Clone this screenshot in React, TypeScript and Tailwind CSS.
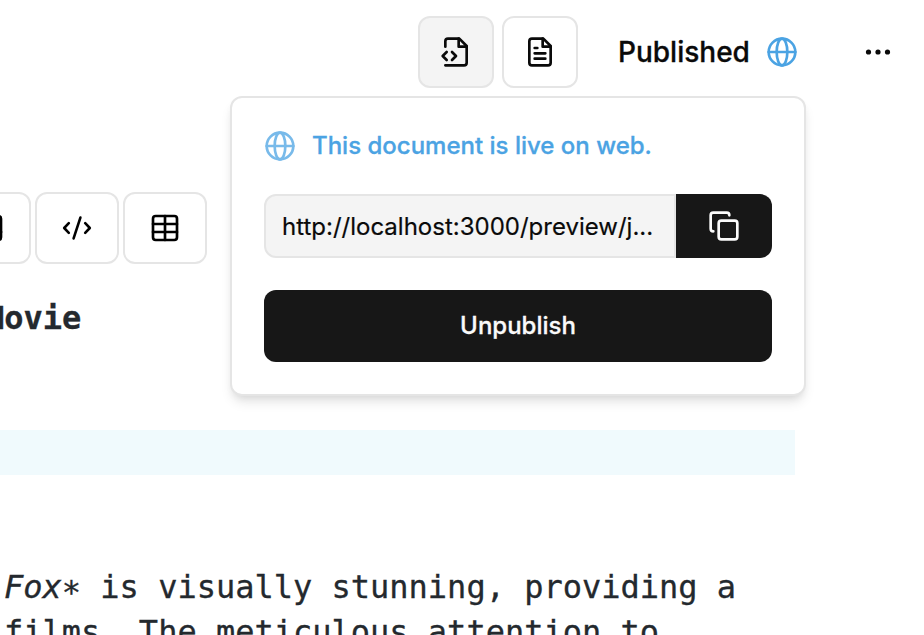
import type { ReactNode } from "react";

function Icon({ children, className = "" }: { children: ReactNode; className?: string }) {
  return (
    <svg
      viewBox="0 0 24 24"
      fill="none"
      stroke="currentColor"
      strokeWidth={2}
      strokeLinecap="round"
      strokeLinejoin="round"
      className={`block size-8 shrink-0 ${className}`}
    >
      {children}
    </svg>
  );
}

function Globe({ className = "" }: { className?: string }) {
  return (
    <Icon className={className}>
      <circle cx="12" cy="12" r="10" />
      <path d="M2 12h20" />
      <ellipse cx="12" cy="12" rx="4" ry="10" />
    </Icon>
  );
}

function ViewButton({ active = false, children }: { active?: boolean; children: ReactNode }) {
  return (
    <button
      className={`flex h-[72px] w-[76px] shrink-0 items-center justify-center rounded-xl border-2 border-[#e5e5e5] ${
        active ? "bg-[#f4f4f4]" : "bg-white"
      }`}
    >
      {children}
    </button>
  );
}

function ToolButton({ children }: { children: ReactNode }) {
  return (
    <button className="flex h-[72px] w-[84px] shrink-0 items-center justify-center rounded-xl border-2 border-[#e5e5e5] bg-white text-black">
      {children}
    </button>
  );
}

function PublishPopover() {
  return (
    <div className="absolute left-[230px] top-24 flex h-[300px] w-[576px] flex-col rounded-xl border-2 border-[#e5e5e5] bg-white p-8 shadow-[0_8px_12px_-2px_rgb(0_0_0/0.1),0_4px_8px_-4px_rgb(0_0_0/0.1)]">
      <div className="flex h-8 items-center gap-4 text-[#4ba3e3]">
        <Globe className="opacity-75" />
        <p className="whitespace-nowrap text-2xl font-medium [-webkit-text-stroke:0.3px]">This document is live on web.</p>
      </div>
      <div className="mt-8 flex h-16">
        <div className="flex w-[412px] items-center rounded-l-xl border-2 border-[#e5e5e5] bg-[#f4f4f4] px-4 pt-0.5">
          <span className="whitespace-nowrap text-2xl text-[#0a0a0a] [-webkit-text-stroke:0.2px]">
            http://localhost:3000/preview/j...
          </span>
        </div>
        <button className="flex w-24 items-center justify-center rounded-r-xl bg-[#171717] text-[#fafafa]">
          <Icon>
            <rect width="14" height="14" x="8" y="8" rx="2" />
            <path d="M4 16c-1.1 0-2-.9-2-2V4c0-1.1.9-2 2-2h10c1.1 0 2 .9 2 2" />
          </Icon>
        </button>
      </div>
      <button className="mt-8 h-[72px] w-full rounded-xl bg-[#171717] text-2xl font-medium text-[#fafafa] [-webkit-text-stroke:0.3px]">
        Unpublish
      </button>
    </div>
  );
}

export default function App() {
  return (
    <div className="relative h-[635px] w-[924px] overflow-hidden bg-white font-['Inter',sans-serif] text-[#0a0a0a]">
      <header className="flex items-center pl-[418px] pt-4">
        <div className="flex gap-2">
          <ViewButton active>
            <Icon>
              <path d="M4 22h14a2 2 0 0 0 2-2V7.5L14.5 2H6a2 2 0 0 0-2 2v4" />
              <path d="M14 2v6h6" />
              <path d="m9 18 3-3-3-3" />
              <path d="m5 12-3 3 3 3" />
            </Icon>
          </ViewButton>
          <ViewButton>
            <Icon>
              <path d="M14.5 2H6a2 2 0 0 0-2 2v16a2 2 0 0 0 2 2h12a2 2 0 0 0 2-2V7.5L14.5 2z" />
              <path d="M14 2v6h6" />
              <path d="M16 13H8M16 17H8M10 9H8" />
            </Icon>
          </ViewButton>
        </div>
        <button className="ml-10 flex items-center">
          <span className="w-[148px] whitespace-nowrap text-left text-[28px] font-medium leading-10 [-webkit-text-stroke:0.3px]">
            Published
          </span>
          <Globe className="text-[#4ba3e3]" />
        </button>
        <button className="ml-16">
          <svg viewBox="0 0 32 32" className="block size-8" fill="currentColor">
            <circle cx="6.5" cy="16" r="2.6" />
            <circle cx="16" cy="16" r="2.6" />
            <circle cx="25.5" cy="16" r="2.6" />
          </svg>
        </button>
      </header>

      <div className="-ml-[53px] mt-[104px] flex gap-1">
        <ToolButton>
          <Icon>
            <rect x="3" y="3" width="18" height="18" rx="2" />
            <circle cx="9" cy="9" r="2" />
            <path d="m21 15-3.1-3.1a2 2 0 0 0-2.8 0L6 21" />
          </Icon>
        </ToolButton>
        <ToolButton>
          <svg
            viewBox="0 0 32 32"
            className="block size-8"
            fill="none"
            stroke="currentColor"
            strokeWidth={2.6}
            strokeLinecap="round"
            strokeLinejoin="round"
          >
            <path d="M7.8 11.2 3.2 16l4.6 4.8M24.2 11.2l4.6 4.8-4.6 4.8M19.4 5.6l-6.8 20.8" />
          </svg>
        </ToolButton>
        <ToolButton>
          <Icon>
            <rect x="3" y="3" width="18" height="18" rx="2" />
            <path d="M12 3v18M3 9h18M3 15h18" />
          </Icon>
        </ToolButton>
      </div>

      <div className="mt-8 font-['DejaVu_Sans_Mono',monospace] text-[32px] leading-[45px] text-[#24292e] [-webkit-text-stroke:0.3px]">
        <p className="-ml-[15px] whitespace-pre font-bold">Movie</p>
        <div className="mt-[89px] h-[45px] w-[795px] bg-[#f0fafd]" />
        <div className="mt-[90px] whitespace-pre pl-1">
          <p>
            <em>Fox</em>
            <span className="relative top-[5px] inline-block leading-none">*</span> is visually stunning, providing a
          </p>
          <p>films. The meticulous attention to</p>
        </div>
      </div>

      <PublishPopover />
    </div>
  );
}
